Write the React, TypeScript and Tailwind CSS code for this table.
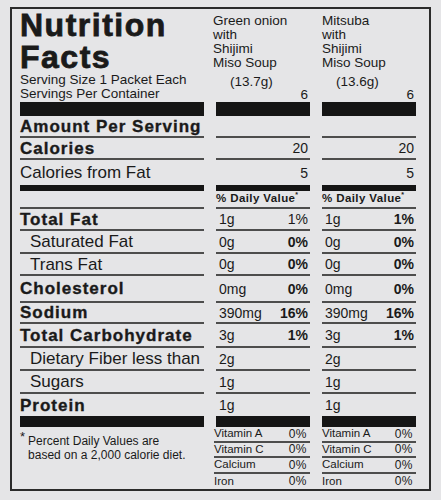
import { FC } from 'react'

const line = 'border-b-2 border-[#4d4d4d]'
const bar = 'bg-[#151515]'

type Row = {
  label?: string
  bold?: boolean
  indent?: boolean
  h: string
  line: boolean
  amt?: string
  pct?: string
  pctBold?: [boolean, boolean]
}

const rows: Row[] = [
  { label: 'Amount Per Serving', bold: true, h: 'h-[22px]', line: true },
  { label: 'Calories', bold: true, h: 'h-[22px]', line: true, pct: '20', pctBold: [false, false] },
  { label: 'Calories from Fat', h: 'h-[25px]', line: false, pct: '5', pctBold: [false, false] },
]

const nutrients: Row[] = [
  { label: 'Total Fat', bold: true, h: 'h-[22px]', line: true, amt: '1g', pct: '1%', pctBold: [false, true] },
  { label: 'Saturated Fat', indent: true, h: 'h-[23px]', line: true, amt: '0g', pct: '0%', pctBold: [true, true] },
  { label: 'Trans Fat', indent: true, h: 'h-[22px]', line: true, amt: '0g', pct: '0%', pctBold: [true, true] },
  { label: 'Cholesterol', bold: true, h: 'h-[27px]', line: true, amt: '0mg', pct: '0%', pctBold: [true, true] },
  { label: 'Sodium', bold: true, h: 'h-[21px]', line: true, amt: '390mg', pct: '16%', pctBold: [true, true] },
  { label: 'Total Carbohydrate', bold: true, h: 'h-[24px]', line: true, amt: '3g', pct: '1%', pctBold: [true, true] },
  { label: 'Dietary Fiber less than', indent: true, h: 'h-[23px]', line: true, amt: '2g' },
  { label: 'Sugars', indent: true, h: 'h-[23px]', line: true, amt: '1g' },
  { label: 'Protein', bold: true, h: 'h-[22px]', line: false, amt: '1g' },
]

const vitamins = ['Vitamin A', 'Vitamin C', 'Calcium', 'Iron']

const products = [
  { name: ['Green onion', 'with', 'Shijimi', 'Miso Soup'], weight: '(13.7g)', shift: '-ml-[3px]' },
  { name: ['Mitsuba', 'with', 'Shijimi', 'Miso Soup'], weight: '(13.6g)', shift: 'ml-0' },
]

const RowCells: FC<{ row: Row }> = ({ row }) => {
  return (
    <>
      <div
        className={`flex items-center ${row.h} ${row.line ? line : ''} ${
          row.bold ? 'font-bold tracking-[1px] [-webkit-text-stroke:0.35px]' : ''
        } ${row.indent ? 'pl-[10px]' : ''} text-[17px] leading-none`}
      >
        {row.label}
      </div>
      {[0, 1].map((i) => (
        <div
          key={i}
          className={`flex items-center justify-between ${row.h} ${row.line ? line : ''} pl-[3px] pr-[2px] text-[14px] leading-none`}
        >
          <span>{row.amt}</span>
          <span className={row.pctBold && row.pctBold[i] ? 'font-bold' : ''}>{row.pct}</span>
        </div>
      ))}
    </>
  )
}

const BarRow: FC<{ h: string }> = ({ h }) => (
  <>
    <div className={`${h} ${bar}`} />
    <div className={`${h} ${bar}`} />
    <div className={`${h} ${bar}`} />
  </>
)

export default function App() {
  return (
    <div className="min-h-screen w-full bg-[#e5e5e7] pt-[7px] pl-[10px] font-['Liberation_Sans',Arial,sans-serif] text-[#1a1a1a]">
      <div className="w-[421px] h-[484px] border-2 border-[#2b2b2b] pl-[8px]">
        <div className="grid grid-cols-[184px_94px_94px] gap-x-3">
          {/* header */}
          <div className="h-[93px]">
            <div className="text-[32px] leading-[32px] font-bold tracking-[1.5px] [-webkit-text-stroke:0.8px]">
              Nutrition
              <br />
              Facts
            </div>
            <div className="text-[13.5px] leading-[14px]">
              Serving Size 1 Packet Each
              <br />
              Servings Per Container
            </div>
          </div>
          {products.map((p) => (
            <div key={p.weight} className="h-[93px] pt-[5px] text-[13.5px]">
              <div className={`leading-[14px] ${p.shift}`}>
                {p.name.map((n) => (
                  <div key={n}>{n}</div>
                ))}
              </div>
              <div className="mt-[5px] pl-[14px] leading-[14px]">{p.weight}</div>
              <div className="text-right pr-[2px] leading-[12px]">6</div>
            </div>
          ))}

          <BarRow h="h-[14px]" />
          {rows.map((r) => (
            <RowCells key={r.label} row={r} />
          ))}
          <BarRow h="h-[6px]" />

          {/* % daily value row */}
          <div className={`h-[18px] ${line}`} />
          {[0, 1].map((i) => (
            <div key={i} className={`h-[18px] ${line} flex items-center text-[11.5px] font-bold tracking-[0.4px] leading-none`}>
              % Daily Value
              <sup className="text-[7px] -mt-[2px]">*</sup>
            </div>
          ))}

          {nutrients.map((r) => (
            <RowCells key={r.label} row={r} />
          ))}
          <BarRow h="h-[11px]" />

          {/* footer */}
          <div className="flex pt-[3px]">
            <span className="text-[13px] leading-none">*</span>
            <div className="pl-[3px] pt-[4px] text-[12px] leading-[14px]">
              Percent Daily Values are
              <br />
              based on a 2,000 calorie diet.
            </div>
          </div>
          {[0, 1].map((i) => (
            <div key={i} className={i === 0 ? '-ml-[2px]' : ''}>
              {vitamins.map((v, j) => (
                <div
                  key={v}
                  className={`flex h-[15.5px] items-center justify-between pr-[3px] ${
                    j < 3 ? line : ''
                  } text-[11.5px] leading-none`}
                >
                  <span>{v}</span>
                  <span className="text-[12px] tracking-[0.5px]">0%</span>
                </div>
              ))}
            </div>
          ))}
        </div>
      </div>
    </div>
  )
}
